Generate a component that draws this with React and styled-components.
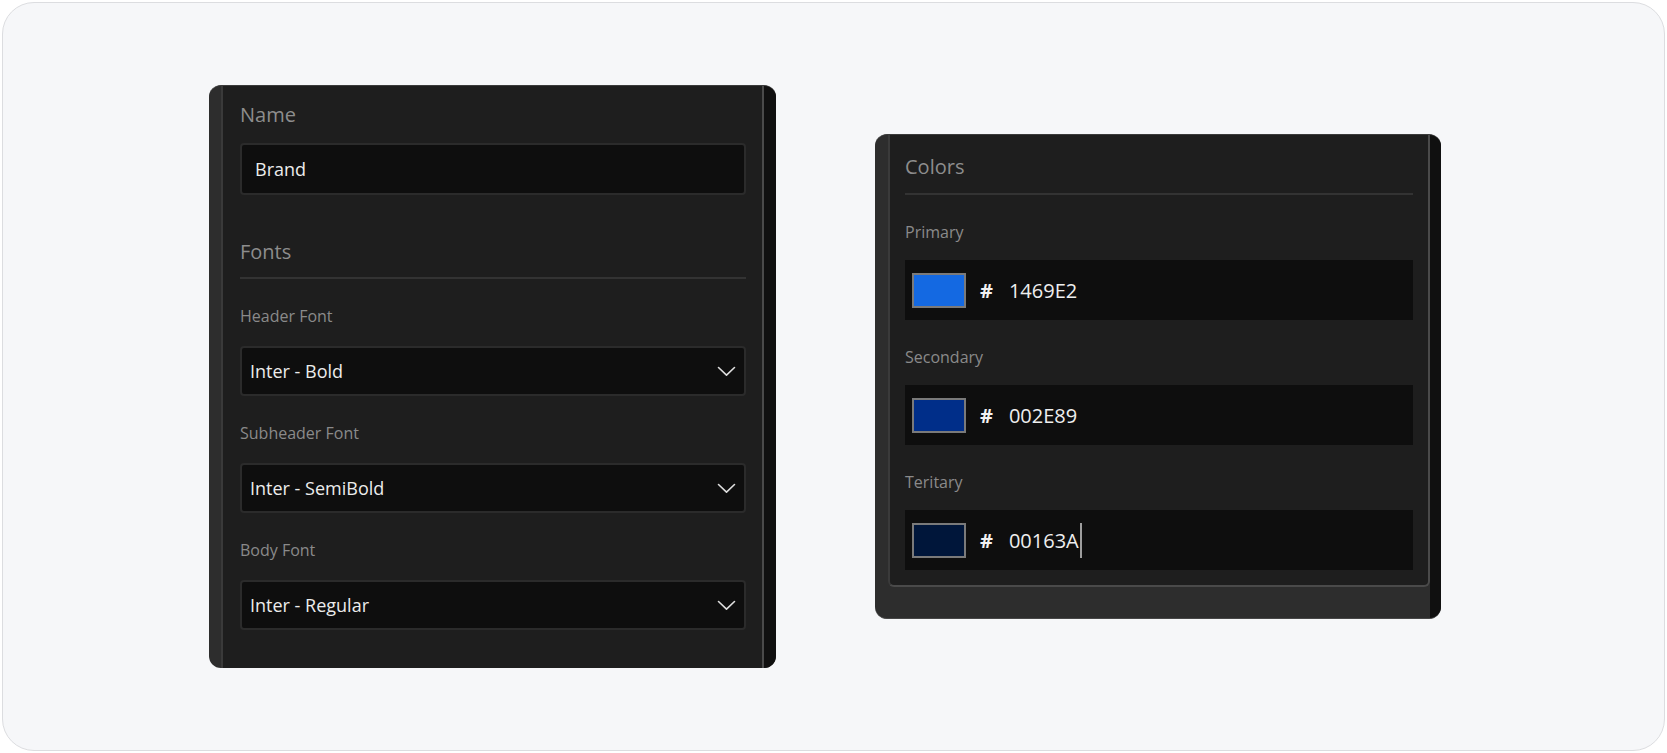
import styled, { createGlobalStyle, css } from "styled-components"

const Global = createGlobalStyle`
    html, body {
        margin: 0;
        background: #ffffff;
        font-family: "Open Sans", "Liberation Sans", sans-serif;
    }
    * {
        box-sizing: border-box;
    }
`;

const Page = styled.div`
    padding: 2px;
`;

const Card = styled.main`
    height: 749px;
    border: 1.5px solid #dcdde0;
    border-radius: 32px;
    background: #f6f7f9;
    display: flex;
    align-items: center;
    justify-content: center;
    gap: 99px;
    padding-right: 17px;
`;

const Panel = styled.section`
    width: ${p => p.$w}px;
    height: ${p => p.$h}px;
    display: flex;
    border-radius: 12px;
    overflow: hidden;
    background: #2d2d2d;
    border-top: 1px solid #3b3b3b;
    ${p => p.$closed && css`
        border-bottom: 1px solid #474747;
    `}
`;

const Gutter = styled.div`
    flex: 1;
    min-width: 0;
    display: flex;
    flex-direction: column;
    padding-left: ${p => p.$left}px;
    padding-bottom: ${p => p.$bottom || 0}px;
`;

const Body = styled.div`
    flex: 1;
    display: flex;
    flex-direction: column;
    background: #1e1e1e;
    border-left: 2px solid #3a3a3a;
    border-right: 2px solid #4a4a4a;
    padding: ${p => p.$pad};
    ${p => p.$closed && css`
        border-bottom: 2px solid #4a4a4a;
        border-radius: 0 0 6px 6px;
    `}
`;

const Track = styled.div`
    width: ${p => p.$w}px;
    background: #101010;
`;

const Title = styled.h2`
    margin: ${p => p.$top || 0}px 0 0;
    font-size: 20px;
    line-height: 24px;
    font-weight: 400;
    color: #8d8d8d;
`;

const Divider = styled.hr`
    margin: ${p => p.$top}px 0 0;
    border: none;
    height: 2px;
    background: #333333;
`;

const Label = styled.label`
    display: block;
    margin-top: 27px;
    margin-bottom: ${p => p.$gap}px;
    font-size: 16px;
    line-height: 20px;
    color: #8a8a8a;
`;

const TextInput = styled.input`
    display: block;
    width: 100%;
    height: 52px;
    margin-top: 16px;
    padding: 0 13px;
    border: 2px solid #2b2b2b;
    border-radius: 4px;
    background: #0e0e0e;
    color: #ececec;
    font-family: inherit;
    font-size: 18px;
    outline: none;
`;

const Select = styled.div`
    height: 50px;
    display: flex;
    align-items: center;
    justify-content: space-between;
    padding: 0 8px 0 8px;
    border: 2px solid #2b2b2b;
    border-radius: 4px;
    background: #0e0e0e;
    color: #ececec;
    font-size: 18px;
`;

const Chevron = () => (
    <svg width="19" height="11" viewBox="0 0 19 11" fill="none">
        <polyline points="1.5,1.5 9.5,9.2 17.5,1.5" stroke="#dedede" strokeWidth="1.6" strokeLinecap="round" strokeLinejoin="round" />
    </svg>
);

const ColorRow = styled.div`
    height: 60px;
    display: flex;
    align-items: center;
    padding-left: 7px;
    background: #0e0e0e;
`;

const Swatch = styled.span`
    width: 54px;
    height: 35px;
    border: 2px solid #7a7a7a;
    background: ${p => p.$color};
`;

const Hash = styled.span`
    margin-left: 14px;
    font-size: 20px;
    font-weight: 700;
    color: #f2f2f2;
`;

const Hex = styled.span`
    margin-left: 16px;
    font-size: 20px;
    color: #efefef;
`;

const Caret = styled.span`
    width: 2px;
    height: 35px;
    margin-left: 1px;
    background: #9d9d9d;
`;

const fonts = [
    { label: "Header Font", value: "Inter - Bold" },
    { label: "Subheader Font", value: "Inter - SemiBold" },
    { label: "Body Font", value: "Inter - Regular" },
];

const colors = [
    { label: "Primary", hex: "1469E2" },
    { label: "Secondary", hex: "002E89" },
    { label: "Teritary", hex: "00163A", editing: true },
];

const App = () => {
    return (
        <Page>
            <Global />
            <Card>
                <Panel $w={567} $h={583}>
                    <Gutter $left={12}>
                        <Body $pad="17px 16px 0 17px">
                            <Title>Name</Title>
                            <TextInput readOnly defaultValue="Brand" />
                            <Title $top={45}>Fonts</Title>
                            <Divider $top={13} />
                            {fonts.map(f => (
                                <div key={f.label}>
                                    <Label $gap={20}>{f.label}</Label>
                                    <Select>
                                        <span>{f.value}</span>
                                        <Chevron />
                                    </Select>
                                </div>
                            ))}
                        </Body>
                    </Gutter>
                    <Track $w={12} />
                </Panel>

                <Panel $w={566} $h={485} $closed>
                    <Gutter $left={13} $bottom={31}>
                        <Body $pad="20px 15px 15px 15px" $closed>
                            <Title>Colors</Title>
                            <Divider $top={14} />
                            {colors.map(c => (
                                <div key={c.label}>
                                    <Label $gap={18}>{c.label}</Label>
                                    <ColorRow>
                                        <Swatch $color={"#" + c.hex} />
                                        <Hash>#</Hash>
                                        <Hex>{c.hex}</Hex>
                                        {c.editing && <Caret />}
                                    </ColorRow>
                                </div>
                            ))}
                        </Body>
                    </Gutter>
                    <Track $w={11} />
                </Panel>
            </Card>
        </Page>
    )
}

export default App
